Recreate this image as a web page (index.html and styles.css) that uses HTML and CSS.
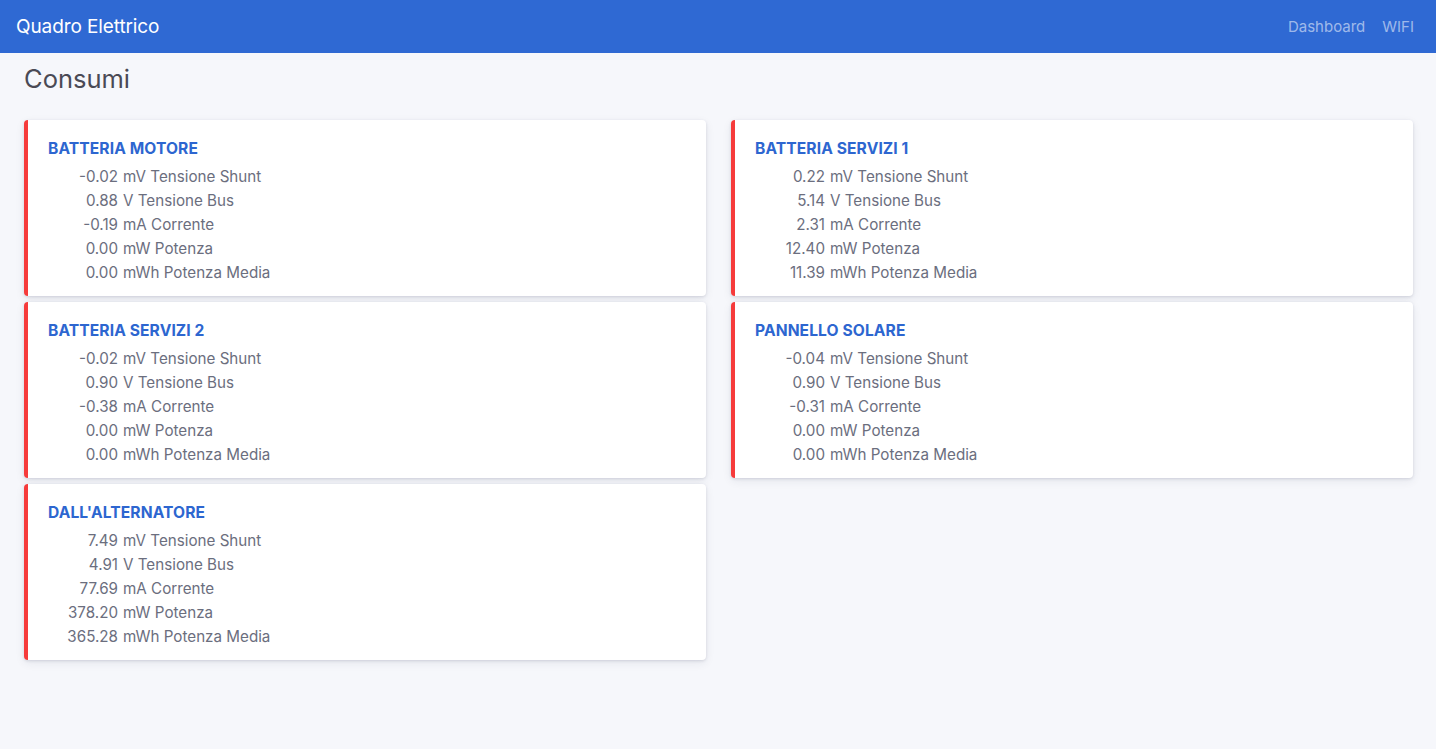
FILE: index.html
```html
<!DOCTYPE html>
<html lang="it">
<head>
<meta charset="utf-8">
<title>Quadro Elettrico</title>
<link rel="stylesheet" href="styles.css">
</head>
<body>
<header class="navbar">
  <div class="brand">Quadro Elettrico</div>
  <nav class="nav">
    <a class="nav-link" href="#">Dashboard</a>
    <a class="nav-link" href="#">WIFI</a>
  </nav>
</header>
<main class="page">
  <h1 class="page-title">Consumi</h1>
  <div class="grid">
    <section class="card">
      <h2 class="card-title">BATTERIA MOTORE</h2>
      <table class="vals">
        <tr><td class="num">-0.02</td><td>mV Tensione Shunt</td></tr>
        <tr><td class="num">0.88</td><td>V Tensione Bus</td></tr>
        <tr><td class="num">-0.19</td><td>mA Corrente</td></tr>
        <tr><td class="num">0.00</td><td>mW Potenza</td></tr>
        <tr><td class="num">0.00</td><td>mWh Potenza Media</td></tr>
      </table>
    </section>
    <section class="card">
      <h2 class="card-title">BATTERIA SERVIZI 1</h2>
      <table class="vals">
        <tr><td class="num">0.22</td><td>mV Tensione Shunt</td></tr>
        <tr><td class="num">5.14</td><td>V Tensione Bus</td></tr>
        <tr><td class="num">2.31</td><td>mA Corrente</td></tr>
        <tr><td class="num">12.40</td><td>mW Potenza</td></tr>
        <tr><td class="num">11.39</td><td>mWh Potenza Media</td></tr>
      </table>
    </section>
    <section class="card">
      <h2 class="card-title">BATTERIA SERVIZI 2</h2>
      <table class="vals">
        <tr><td class="num">-0.02</td><td>mV Tensione Shunt</td></tr>
        <tr><td class="num">0.90</td><td>V Tensione Bus</td></tr>
        <tr><td class="num">-0.38</td><td>mA Corrente</td></tr>
        <tr><td class="num">0.00</td><td>mW Potenza</td></tr>
        <tr><td class="num">0.00</td><td>mWh Potenza Media</td></tr>
      </table>
    </section>
    <section class="card">
      <h2 class="card-title">PANNELLO SOLARE</h2>
      <table class="vals">
        <tr><td class="num">-0.04</td><td>mV Tensione Shunt</td></tr>
        <tr><td class="num">0.90</td><td>V Tensione Bus</td></tr>
        <tr><td class="num">-0.31</td><td>mA Corrente</td></tr>
        <tr><td class="num">0.00</td><td>mW Potenza</td></tr>
        <tr><td class="num">0.00</td><td>mWh Potenza Media</td></tr>
      </table>
    </section>
    <section class="card">
      <h2 class="card-title">DALL'ALTERNATORE</h2>
      <table class="vals">
        <tr><td class="num">7.49</td><td>mV Tensione Shunt</td></tr>
        <tr><td class="num">4.91</td><td>V Tensione Bus</td></tr>
        <tr><td class="num">77.69</td><td>mA Corrente</td></tr>
        <tr><td class="num">378.20</td><td>mW Potenza</td></tr>
        <tr><td class="num">365.28</td><td>mWh Potenza Media</td></tr>
      </table>
    </section>
  </div>
</main>
</body>
</html>
```
FILE: styles.css
```css
* { box-sizing: border-box; }
html, body { margin: 0; padding: 0; }
body {
  background: #f6f7fb;
  font-family: Inter, "Noto Sans", "Liberation Sans", sans-serif;
  color: #6b6e7e;
  height: 749px;
}
.navbar {
  height: 53px;
  background: #2f69d3;
  display: flex;
  align-items: center;
  justify-content: space-between;
  padding: 0 22px 0 16px;
}
.brand {
  color: #ffffff;
  font-size: 19px;
  letter-spacing: -0.1px;
}
.nav { display: flex; gap: 17px; }
.nav-link {
  color: rgba(255,255,255,0.55);
  text-decoration: none;
  font-size: 15px;
}
.page { padding: 0 23px 0 24px; }
.page-title {
  margin: 0;
  padding-top: 11px;
  height: 67px;
  font-size: 25.5px;
  font-weight: 400;
  color: #4a4a55;
  line-height: 30px;
}
.grid {
  display: grid;
  grid-template-columns: 1fr 1fr;
  column-gap: 25px;
  row-gap: 6px;
  align-items: start;
}
.card {
  background: #ffffff;
  border-radius: 4px;
  border-left: 4px solid #f63b3b;
  box-shadow: 0 1px 3px rgba(40, 45, 80, 0.14), 0 3px 10px rgba(40, 45, 80, 0.08);
  padding: 17px 20px 12px 20px;
  height: 176px;
}
.card-title {
  margin: 0 0 4px 0;
  font-size: 15.6px;
  font-weight: 700;
  line-height: 24px;
  color: #2d66d0;
  letter-spacing: 0.1px;
}
.vals {
  border-collapse: collapse;
  font-size: 15.2px;
  line-height: 24px;
  color: #6b6e7e;
}
.vals td { padding: 0; white-space: nowrap; }
.vals td.num {
  width: 75px;
  text-align: right;
  padding-right: 5px;
}
```
